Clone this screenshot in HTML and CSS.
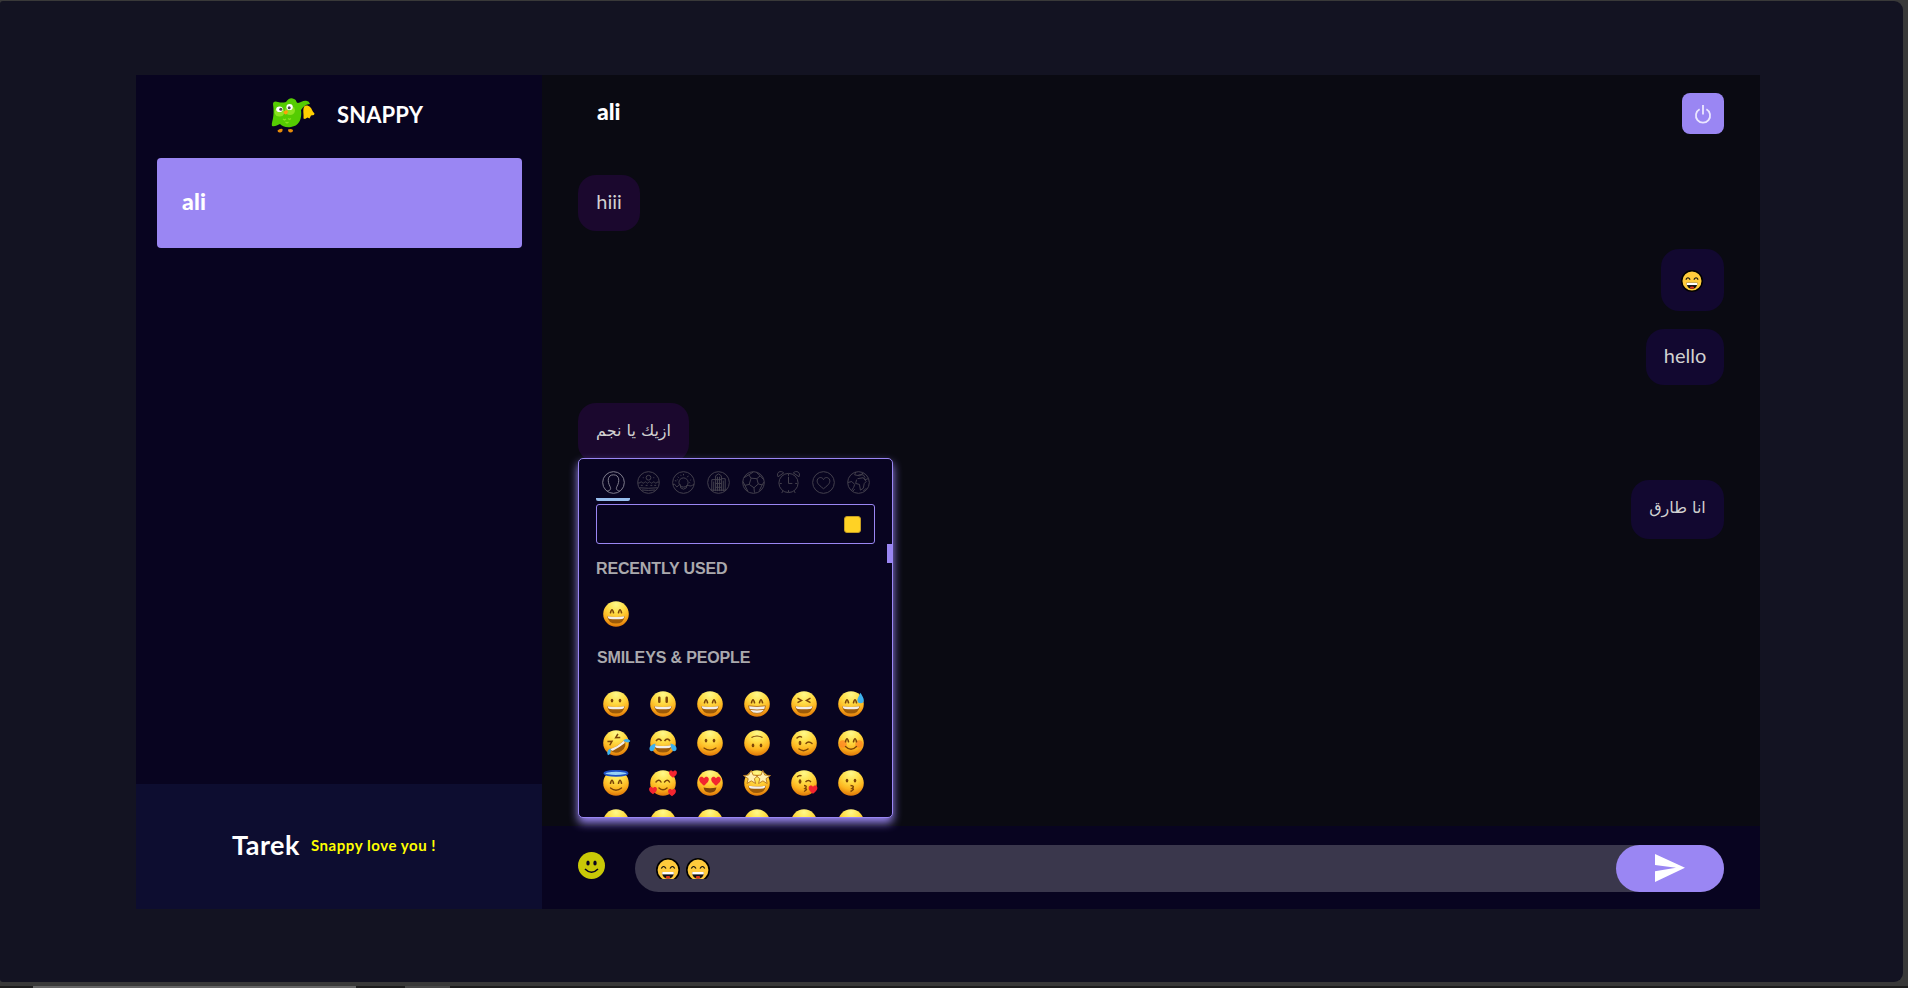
FILE: index.html
```html
<!DOCTYPE html>
<html lang="en">
<head>
<meta charset="utf-8">
<title>Snappy</title>
<link rel="stylesheet" href="styles.css">
</head>
<body>
<svg class="defs" width="0" height="0" aria-hidden="true">
  <defs>
    <radialGradient id="skin" cx=".5" cy=".12" r=".92">
      <stop offset="0" stop-color="#fff98a"/><stop offset=".35" stop-color="#ffe04a"/><stop offset=".68" stop-color="#fdb51f"/><stop offset="1" stop-color="#d96c04"/>
    </radialGradient>
    <symbol id="base" viewBox="0 0 26 26"><circle cx="13" cy="13" r="12.8" fill="url(#skin)"/></symbol>
    <symbol id="happy-eyes" viewBox="0 0 26 26"><path d="M7.500 11.800q1.500-6 3 0M15.500 11.800q1.500-6 3 0" fill="none" stroke="#7c4508" stroke-width="1.600" stroke-linecap="round"/></symbol>
    <symbol id="dot-eyes" viewBox="0 0 26 26"><ellipse cx="9" cy="9.600" rx="1.300" ry="1.900" fill="#7c4508"/><ellipse cx="17" cy="9.600" rx="1.300" ry="1.900" fill="#7c4508"/></symbol>
    <symbol id="open-mouth" viewBox="0 0 26 26"><path d="M4.200 15.200q8.800 1.600 17.600 0q-1 7.400-8.800 7.400t-8.800-7.400z" fill="#9c5a08"/><path d="M4.600 15.200q8.400 1.600 16.800 0q-.3 2.500-2.200 2.700q-6.200.8-12.400 0q-1.900-.2-2.200-2.700z" fill="#f3efea"/></symbol>
    <symbol id="heart" viewBox="0 0 10 10"><path d="M5 9.300C1 6.300.3 4.500.8 2.600 1.500.6 4 .6 5 2.500 6 .6 8.500.6 9.200 2.600 9.700 4.500 9 6.300 5 9.300z" fill="#f3252f"/></symbol>
    <symbol id="grin" viewBox="0 0 26 26"><use href="#base"/><use href="#dot-eyes"/><use href="#open-mouth"/></symbol>
    <symbol id="smiley" viewBox="0 0 26 26"><use href="#base"/><path d="M9.300 6.800v4M16.700 6.800v4" stroke="#7c4508" stroke-width="2.500" stroke-linecap="round"/><use href="#open-mouth"/></symbol>
    <symbol id="smile" viewBox="0 0 26 26"><use href="#base"/><use href="#happy-eyes"/><use href="#open-mouth"/></symbol>
    <symbol id="beam" viewBox="0 0 26 26"><use href="#base"/><use href="#happy-eyes"/><path d="M4.500 14.800q8.500 1.400 17 0q-.8 7.600-8.500 7.600t-8.500-7.600z" fill="#f3efea" stroke="#a9630a" stroke-width=".8"/><path d="M5.500 18.400q7.500 1.200 15 0" stroke="#a9630a" stroke-width=".9" fill="none"/></symbol>
    <symbol id="squint" viewBox="0 0 26 26"><use href="#base"/><path d="M6.500 7.200l4 2.200-4 2.200M19.500 7.200l-4 2.200 4 2.200" fill="none" stroke="#7c4508" stroke-width="1.500"/><use href="#open-mouth"/></symbol>
    <symbol id="sweat" viewBox="0 0 26 26"><use href="#smile"/><path d="M22.500 1.800c1.500 3 3.300 5.200 3.300 7.200a3.200 3.200 0 0 1-6.400 0c0-2 2-4.200 3.100-7.200z" fill="#3db2ee"/></symbol>
    <symbol id="rofl" viewBox="0 0 26 26" overflow="visible"><use href="#base"/><g transform="rotate(-32 13 13)"><path d="M6.500 7.200l4 2.200-4 2.200M19.500 6.200l-4 2.200 4 2.200" fill="none" stroke="#7c4508" stroke-width="1.500"/><use href="#open-mouth"/><path d="M5.500 14.500q-5.500 0-5.800 4.500q3.500 1.600 5.800-4.500zM20.500 14.500q5.500 0 5.800 4.500q-3.500 1.600-5.800-4.500z" fill="#3db2ee"/></g></symbol>
    <symbol id="joy" viewBox="0 0 26 26" overflow="visible"><use href="#base"/><path d="M6 11q3-4 5.500 0M14.500 11q3-4 5.500 0" fill="none" stroke="#7c4508" stroke-width="1.600"/><use href="#open-mouth"/><path d="M5.500 13.500q-5.500 1.500-6 4.500t2.500 3.200q3-.2 3.500-7.700zM20.500 13.500q5.500 1.500 6 4.500t-2.500 3.200q-3-.2-3.500-7.700z" fill="#3db2ee"/></symbol>
    <symbol id="slight" viewBox="0 0 26 26"><use href="#base"/><use href="#dot-eyes" y="1"/><path d="M7 18q6 4.200 12 0" fill="none" stroke="#7c4508" stroke-width="1.200" stroke-linecap="round"/></symbol>
    <symbol id="upside" viewBox="0 0 26 26"><use href="#base"/><g transform="rotate(180 13 12.500)"><use href="#dot-eyes"/><path d="M7.500 17.500q5.500 3 11 0" fill="none" stroke="#7c4508" stroke-width="1.200"/></g></symbol>
    <symbol id="wink" viewBox="0 0 26 26"><use href="#base"/><ellipse cx="9" cy="13" rx="1.400" ry="2.200" fill="#7c4508"/><path d="M6 8q2.500-2.500 4.500-1M15 13.500q2.500-3 6 0M8 19q4.500 3.300 9 0" fill="none" stroke="#7c4508" stroke-width="1.500" stroke-linecap="round"/></symbol>
    <symbol id="blush" viewBox="0 0 26 26"><use href="#base"/><circle cx="5" cy="14" r="3.800" fill="#ff7b22" opacity=".65"/><circle cx="21" cy="14" r="3.800" fill="#ff7b22" opacity=".65"/><use href="#happy-eyes"/><path d="M7.500 16.500q5.500 5.500 11 0" fill="none" stroke="#7c4508" stroke-width="1.400" stroke-linecap="round"/></symbol>
    <symbol id="halo" viewBox="0 0 26 26"><use href="#base"/><ellipse cx="13" cy="3.300" rx="11.600" ry="2.500" fill="#97d2f5" stroke="#1c4fc4" stroke-width="1.800"/><use href="#happy-eyes" y="1.500"/><path d="M7.500 18q5.500 4.500 11 0" fill="none" stroke="#7c4508" stroke-width="1.400" stroke-linecap="round"/></symbol>
    <symbol id="love" viewBox="0 0 26 26" overflow="visible"><use href="#base"/><path d="M6 12q3-3.500 5 0M14.500 12q3-3.500 5 0M9 18q4 3.500 8 0" fill="none" stroke="#7c4508" stroke-width="1.500" stroke-linecap="round"/><use href="#heart" x="18.500" y="-.5" width="9" height="9"/><use href="#heart" x="-1.500" y="16" width="9" height="9"/><use href="#heart" x="17.500" y="18" width="9" height="9"/></symbol>
    <symbol id="heart-eyes" viewBox="0 0 26 26"><use href="#base"/><use href="#heart" x="1.500" y="5.500" width="11" height="11"/><use href="#heart" x="13.500" y="5.500" width="11" height="11"/><path d="M6.500 17.500q6.500 1.400 13 0q-1 5.200-6.500 5.200t-6.500-5.200z" fill="#7c4508"/></symbol>
    <symbol id="star-eyes" viewBox="0 0 26 26" overflow="visible"><use href="#base"/><use href="#open-mouth" y=".5"/><path d="M7.200.5l2 4.600 5 .4-3.800 3.200 1.200 4.800-4.300-2.600-4.300 2.600 1.200-4.800L-.5 5.500l5-.4zM18.800.5l2 4.600 5.700.4-4.500 3.200 1.200 4.800-4.300-2.600-4.300 2.600 1.200-4.800-4-3.200 5.200-.4z" fill="#fff0b0" stroke="#b9771c" stroke-width=".9"/></symbol>
    <symbol id="kiss" viewBox="0 0 26 26" overflow="visible"><use href="#base"/><ellipse cx="9" cy="11.500" rx="1.400" ry="2.200" fill="#7c4508"/><path d="M6 7q2.500-2.500 4.500-1M14.500 12q3-3 5.500 0M13 15.500q4 .6 1 3 3.500.6-1 3" fill="none" stroke="#7c4508" stroke-width="1.400"/><use href="#heart" x="17" y="14.500" width="10" height="10"/></symbol>
    <symbol id="kissing" viewBox="0 0 26 26"><use href="#base"/><use href="#dot-eyes" y="1"/><path d="M12.500 15.500q5 .6 1.500 3 3.500.6-1.500 3" fill="none" stroke="#7c4508" stroke-width="1.400"/></symbol>
    <symbol id="laugh" viewBox="0 0 24 24"><circle cx="12" cy="12" r="11.200" fill="#ffcb3c" stroke="#000" stroke-width="1.600"/><path d="M5.300 10.500q2.200-4 4.700 0M14 10.500q2.500-4 4.700 0" fill="none" stroke="#111" stroke-width="1.200"/><path d="M6 14h12q-.3 6.600-6 6.600T6 14z" fill="#111"/><path d="M6.200 14h11.600v2.400H6.200z" fill="#fff"/><ellipse cx="12" cy="19.300" rx="2.300" ry="1.200" fill="#e6351c"/></symbol>
  </defs>
</svg>

<div class="frame">
  <main class="window">
    <aside class="sidebar">
      <div class="brand">
        <svg class="owl" viewBox="0 0 44 36">
          <path d="M2 6C2 3 5 3 7 4q4 1 8 0c2-3 5-5 8-3 3 1 2 4 4 4 3 0 5-3 9-2q2 0 3 3c-4 0-7 3-9 6 1 8-1 16-10 17-5 1-9-1-11-3-3 1-5 3-8 2C0 24 4 20 2 6z" fill="#55cc02"/>
          <ellipse cx="8.500" cy="14" rx="5" ry="4.600" fill="#8ae320"/><ellipse cx="19" cy="12.500" rx="5" ry="4.600" fill="#8ae320"/>
          <ellipse cx="8.500" cy="11.300" rx="3.300" ry="2.800" fill="#fff"/><ellipse cx="18.600" cy="9" rx="3.200" ry="3.100" fill="#fff"/>
          <circle cx="9.800" cy="11.300" r="1.500" fill="#4c4c4c"/><circle cx="18.200" cy="9.800" r="1.500" fill="#4c4c4c"/>
          <path d="M12.500 14q2-3 4.500-1-.5 3.500-2.500 3.400-1.700-.4-2-2.400z" fill="#ff9f0a"/>
          <path d="M12 21l1.500 1 1.500-1M17 20.500l1.500 1 1.500-1M14.500 24l1.500 1 1.500-1" stroke="#8ae320" stroke-width="1.300" fill="none"/>
          <path d="M33 9c1-2 4-2 6 0 2 1.500 2 4 4.500 6.500l-.5 1.500-3 .6-1.500 2.800-2-1-2.500 1.600-1.500-.5C33 16 31.500 12.500 33 9z" fill="#ffcf00"/>
          <path d="M6.500 32.500q2.500-2.500 5-1.500.5 3-2 3.500-3 .5-3-2zM17 31.500q3-1 5 .5 0 2.500-2.500 2.500-2.500 0-2.500-3z" fill="#e78b0a"/>
        </svg>
        <h1 class="brand-name">SNAPPY</h1>
      </div>
      <div class="contacts"><div class="contact">ali</div></div>
      <div class="profile"><span class="profile-name">Tarek</span><span class="profile-note">Snappy love you !</span></div>
    </aside>

    <section class="chat">
      <header class="chat-header">
        <h2 class="chat-name">ali</h2>
        <button class="logout" aria-label="Log out">
          <svg viewBox="0 0 18 20" width="18" height="20"><path d="M5.600 5.300a7.100 7.100 0 1 0 6.800 0M9 1v9.500" fill="none" stroke="#ebe7ff" stroke-width="1.800"/></svg>
        </button>
      </header>
      <div class="messages">
        <div class="msg received">hiii</div>
        <div class="msg sent tall"><svg class="msg-emoji"><use href="#laugh"/></svg></div>
        <div class="msg sent hello">hello</div>
        <div class="msg received arabic arabic-in" dir="rtl" lang="ar">ازيك يا نجم</div>
        <div class="msg sent arabic arabic-out" dir="rtl" lang="ar">انا طارق</div>
      </div>
      <div class="composer">
        <svg class="emoji-toggle" viewBox="0 0 27 27"><circle cx="13.500" cy="13.500" r="13.500" fill="#c9c907"/><ellipse cx="10" cy="11" rx="1.700" ry="2.500" fill="#080420"/><ellipse cx="17" cy="11" rx="1.700" ry="2.500" fill="#080420"/><path d="M7 17q6.500 6.500 13 0" fill="none" stroke="#080420" stroke-width="1.500"/></svg>
        <div class="field">
          <div class="draft"><svg><use href="#laugh"/></svg><svg><use href="#laugh"/></svg></div>
          <button class="send" aria-label="Send"><svg viewBox="0 0 30 28" width="30" height="28"><path d="M0 0l30 13.800L0 28V17.200l21-3.400L0 11z" fill="#fff"/></svg></button>
        </div>

        <div class="picker">
          <nav class="tabs">
            <span class="tab active"><svg viewBox="0 0 24 24"><circle cx="12" cy="12" r="11.300"/><path d="M5.500 21c4-1 4-2.500 2.800-5C5.500 11 5.500 4 12 4s6.500 7 3.700 12c-1.200 2.500-1.200 4 2.800 5"/></svg></span>
            <span class="tab"><svg viewBox="0 0 24 24"><circle cx="12" cy="12" r="11.300"/><circle cx="12" cy="7" r="2.500"/><path d="M1 12q1 1.500 2.200 0t2.200 0 2.200 0 2.200 0 2.200 0 2.200 0 2.200 0 2.200 0 2.200 0 2.200 0M4 15h2M9 15h2M14 15h2M18 15h2M2.500 17.500q9.500 1 19 0M5 19.800q7 1 14 0M6 7h1M17 7h1"/></svg></span>
            <span class="tab"><svg viewBox="0 0 24 24"><circle cx="12" cy="12" r="11.300"/><circle cx="12" cy="12" r="4.800"/><path d="M.8 14q2.500-1 3.200 1.500t3-.5 2 2.500l3 1.500 3-1.500q0-3.500 2-2.500t3 .5 3.200-1.500M6 6l1 1M12 3v1.500M17 5l-1 1.500M3 10l1.500.5M20 9l-1 .7M9 4l.5 1M5 9.500l1-.5M19 12.500l-1-.5"/></svg></span>
            <span class="tab"><svg viewBox="0 0 24 24"><circle cx="12" cy="12" r="11.300"/><path d="M9 21V5l3-2 3 2v16M5 20V9h4M15 8h4v12M11 6v15M13 6v15M7 11v10M17 10v11M9 9h6M9 13h6M9 17h6M4 20h16"/></svg></span>
            <span class="tab"><svg viewBox="0 0 24 24"><circle cx="12" cy="12" r="11.300"/><path d="M9.500 7.500l6 .5 1.500 5.500-4.500 4-5-3.500zM9.500 7.500L7 4M15.500 8L19 5M17 13.500l4 1M12.500 17.500l.5 5M7.500 14L3 15M7 4l5-3M7 4L2 7M19 5l-4-3.500M19 5l3.500 4M3 15L1 11M3 15l3 6M21 14.500l-3 6M21 14.500l2-3"/></svg></span>
            <span class="tab"><svg viewBox="0 0 24 24"><circle cx="12" cy="12.500" r="10"/><path d="M12 6v7h4M12 3v2M3 13h2M19 13h2M12 20v2M6 21l-1 2M18 21l1 2M1 6C-1 1 4-1 7 2zM23 6c2-5-3-7-6-4z"/></svg></span>
            <span class="tab"><svg viewBox="0 0 24 24"><circle cx="12" cy="12" r="11.300"/><path d="M12 18.500C6 14 5 12 5.500 9.500 6.500 6 10.800 6 12 9c1.200-3 5.500-3 6.500.5C19 12 18 14 12 18.500z"/></svg></span>
            <span class="tab"><svg viewBox="0 0 24 24"><circle cx="12" cy="12" r="11.300"/><path d="M1 12l4-1 3 3-1 3-2 3M9 1l-1 3 5 1 4-3M11 8l6-1 2 2 3-1M10 9l-1 4 4 1 1 6 3-2 1-5 2-2-3-4M12 4h5l2 3M6 21l2-2M17 21l3-3"/></svg></span>
          </nav>
          <div class="search"><span class="search-tone"></span></div>
          <div class="emoji-scroll">
            <h3 class="group-title">RECENTLY USED</h3>
            <div class="emoji-grid"><svg><use href="#smile"/></svg></div>
            <h3 class="group-title second">SMILEYS &amp; PEOPLE</h3>
            <div class="emoji-grid">
              <svg><use href="#grin"/></svg><svg><use href="#smiley"/></svg><svg><use href="#smile"/></svg><svg><use href="#beam"/></svg><svg><use href="#squint"/></svg><svg><use href="#sweat"/></svg>
              <svg><use href="#rofl"/></svg><svg><use href="#joy"/></svg><svg><use href="#slight"/></svg><svg><use href="#upside"/></svg><svg><use href="#wink"/></svg><svg><use href="#blush"/></svg>
              <svg><use href="#halo"/></svg><svg><use href="#love"/></svg><svg><use href="#heart-eyes"/></svg><svg><use href="#star-eyes"/></svg><svg><use href="#kiss"/></svg><svg><use href="#kissing"/></svg>
              <svg><use href="#joy"/></svg><svg><use href="#joy"/></svg><svg><use href="#base"/></svg><svg><use href="#base"/></svg><svg><use href="#base"/></svg><svg><use href="#base"/></svg>
            </div>
          </div>
          <span class="scroll-thumb"></span>
        </div>
      </div>
    </section>
  </main>
</div>
<footer class="taskbar"><span class="task wide"></span><span class="task small"></span></footer>
</body>
</html>
```
FILE: styles.css
```css
* { box-sizing: border-box; margin: 0; padding: 0; }
body {
  height: 988px;
  overflow: hidden;
  background: #393939;
  font-family: Lato, "DejaVu Sans", sans-serif;
  color: #fff;
}
.defs { display: block; height: 0; }
button { border: 0; color: inherit; font: inherit; }
svg { display: block; flex: none; }

.frame {
  margin-top: 1px;
  width: 1903px;
  height: 981px;
  padding: 74px 0 0 136px;
  background: #131322;
  border-radius: 3px 9px 9px 3px;
}
.window {
  width: 1624px;
  height: 834px;
  display: grid;
  grid-template-columns: 406px 1fr;
  background: #0a0a12;
}

/* Sidebar */
.sidebar {
  display: grid;
  grid-template-rows: 83px 626px 125px;
  background: #080420;
}
.brand { display: flex; align-items: center; padding: 0 0 3px 135px; gap: 22px; }
.owl { width: 44px; height: 36px; margin-top: 2px; }
.brand-name { font-size: 22px; line-height: 30px; font-weight: 700; letter-spacing: .1px; margin-top: -1px; }
.contacts { padding: 0 20px 0 21px; }
.contact {
  height: 90px;
  padding-left: 25px;
  border-radius: 4px;
  background: #9a86f3;
  font-size: 23px;
  font-weight: 900;
  line-height: 87px;
  letter-spacing: .2px;
}
.profile {
  display: flex;
  align-items: center;
  padding: 0 0 5px 96px;
  gap: 11px;
  background: #0d0d30;
}
.profile-name { font-size: 27px; font-weight: 700; letter-spacing: .5px; }
.profile-note { color: #ff0; font-size: 15px; font-weight: 700; line-height: 20px; padding-top: 2px; letter-spacing: .55px; white-space: nowrap; }

/* Conversation */
.chat { display: grid; grid-template-rows: 83px 668px 83px; }
.chat-header { display: flex; align-items: flex-start; justify-content: space-between; padding: 18px 36px 0 55px; }
.chat-name { font-size: 23px; line-height: 37px; font-weight: 900; }
.logout {
  width: 42px;
  height: 41px;
  border-radius: 8px;
  background: #9a86f3;
  display: grid;
  place-items: center;
}
.messages { display: flex; flex-direction: column; gap: 18px; padding: 17px 36px 0; }
.msg {
  height: 56px;
  width: 62px;
  border-radius: 18px;
  color: #d1d1d1;
  font-size: 20px;
  display: flex;
  align-items: center;
  justify-content: center;
  padding-bottom: 4px;
  white-space: nowrap;
}
.received { align-self: flex-start; background: #1b082e; }
.sent { align-self: flex-end; background: #120830; }
.tall { width: 63px; height: 62px; padding: 2px 2px 0 0; }
.hello { width: 78px; }
.msg-emoji { width: 22px; height: 22px; }
.arabic { height: 59px; font-family: "DejaVu Sans", sans-serif; font-size: 16px; }
.arabic-in { width: 111px; }
.arabic-out { width: 93px; }

/* Composer */
.composer {
  position: relative;
  display: flex;
  align-items: flex-start;
  gap: 30px;
  padding: 19px 36px 0;
  background: #080420;
}
.emoji-toggle { width: 27px; height: 27px; margin-top: 7px; }
.field {
  flex: 1;
  height: 47px;
  display: flex;
  justify-content: space-between;
  border-radius: 24px;
  background: #3a374c;
}
.draft { display: flex; gap: 6px; height: 21px; margin: 13px 0 0 21px; overflow: hidden; }
.draft svg { width: 24px; height: 24px; }
.send {
  width: 108px;
  border-radius: 24px;
  background: #9a86f3;
  display: flex;
  align-items: center;
  padding: 0 0 1px 39px;
}

/* Emoji picker, floating above the composer */
.picker {
  position: absolute;
  left: 36px;
  bottom: 91px;
  width: 315px;
  height: 360px;
  border: 1px solid #9a86f3;
  border-radius: 5px;
  background: #080420;
  box-shadow: 0 5px 10px #9a86f3;
  display: flex;
  flex-direction: column;
  overflow: hidden;
}
.tabs { display: flex; height: 42px; padding: 12px 0 0 17px; }
.tab { width: 35px; border-bottom: 3px solid transparent; padding-left: 6px; }
.tab svg { width: 23px; height: 23px; fill: none; stroke: #46434f; stroke-width: 1; }
.tab.active { width: 34px; margin-right: 1px; border-color: #98bfee; border-radius: 0 0 2px 2px; }
.tab.active svg { stroke: #858391; }
.search {
  width: 279px;
  height: 40px;
  margin: 3px 0 0 17px;
  flex: none;
  border: 1px solid #9a86f3;
  border-radius: 3px;
  display: flex;
  justify-content: flex-end;
  align-items: center;
  padding-right: 13px;
}
.search-tone { width: 17px; height: 17px; border-radius: 3px; background: #ffd225; border: 1px solid #c49c22; }
.emoji-scroll { flex: 1; overflow: hidden; padding-left: 13px; }
.group-title {
  padding: 15px 0 0 4px;
  height: 50px;
  font: 700 16px/20px "Liberation Sans", Arial, sans-serif;
  color: #aaa9ad;
  letter-spacing: -.15px;
}
.group-title.second { height: 51px; padding-left: 5px; }
.emoji-grid { display: grid; grid-template-columns: repeat(6, 47px); grid-auto-rows: 39.400px; align-items: center; justify-items: center; }
.emoji-grid svg { width: 26px; height: 26px; overflow: visible; }
.scroll-thumb { position: absolute; right: 0; top: 85px; width: 5px; height: 19px; background: #9a86f3; }

/* Bottom strip */
.taskbar { display: flex; gap: 49px; height: 2px; margin-top: 4px; padding-left: 33px; background: #1d1d1d; }
.task.wide { width: 323px; background: #666; }
.task.small { width: 45px; background: #484848; }
```
